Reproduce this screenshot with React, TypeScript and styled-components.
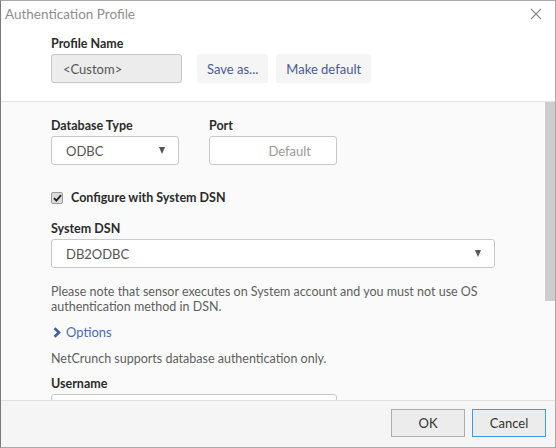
import React from "react";
import styled, { createGlobalStyle } from "styled-components";

const GlobalStyle = createGlobalStyle`
  html, body { margin: 0; padding: 0; background: #ffffff; }
  body { font-family: Lato, "Open Sans", sans-serif; font-size: 12.5px; color: #555; }
  * { box-sizing: border-box; }
`;

const Dialog = styled.div`
  width: 556px;
  height: 448px;
  display: flex;
  flex-direction: column;
  border-left: 1px solid #7a7a7a;
  border-top: 1px solid #a9a9a9;
  border-right: 1px solid #a9a9a9;
  border-bottom: 1px solid #a9a9a9;
  background: #fff;
  overflow: hidden;
`;

const Header = styled.div`
  flex: none;
  height: 101px;
  background: #fff;
  border-bottom: 1px solid #e4e4e4;
  display: flex;
  flex-direction: column;
`;

const TitleBar = styled.div`
  height: 26px;
  display: flex;
  align-items: center;
  justify-content: space-between;
  padding: 0 12px 0 4px;
`;

const Title = styled.div`
  font-size: 13.5px;
  color: #8e8e8e;
`;

const CloseButton = styled.button`
  border: 0;
  background: transparent;
  padding: 0;
  width: 14px;
  height: 14px;
  display: flex;
  align-items: center;
  justify-content: center;
  cursor: pointer;
`;

const HeaderContent = styled.div`
  padding: 9px 0 0 50px;
`;

const Label = styled.div`
  font-weight: 700;
  font-size: 12.5px;
  color: #2b2b2b;
  line-height: 15px;
  margin-bottom: 3px;
`;

const Row = styled.div<{ $gap: number }>`
  display: flex;
  gap: ${(p) => p.$gap}px;
  align-items: flex-start;
`;

const ReadonlyInput = styled.div`
  width: 131px;
  height: 29px;
  border: 1px solid #c6c6c6;
  border-radius: 3px;
  background: #ececec;
  color: #555;
  display: flex;
  align-items: center;
  padding-left: 11px;
  font-size: 13px;
`;

const LinkButton = styled.button`
  height: 29px;
  border: 0;
  border-radius: 3px;
  background: #f5f5f5;
  color: #4a5a91;
  font-family: inherit;
  font-size: 13px;
  padding: 0 10px;
  cursor: pointer;
`;

const ButtonGroup = styled.div`
  display: flex;
  gap: 8px;
  margin-left: 15px;
`;

const BodyFrame = styled.div`
  flex: 1;
  position: relative;
  overflow: hidden;
  background: #fafafa;
`;

const Body = styled.div`
  height: 100%;
  overflow-y: scroll;
  scrollbar-width: none;
  padding: 16px 0 30px 50px;
  &::-webkit-scrollbar { display: none; }
`;

const ScrollThumb = styled.div`
  position: absolute;
  top: 0;
  right: 0;
  width: 10px;
  height: 199px;
  background: #cdcdcd;
`;

const Field = styled.div<{ $mb?: number }>`
  display: flex;
  flex-direction: column;
  margin-bottom: ${(p) => p.$mb ?? 0}px;
`;

const SelectBox = styled.div<{ $width: number }>`
  width: ${(p) => p.$width}px;
  height: 29px;
  border: 1px solid #c8c8c8;
  border-radius: 3px;
  background: #fff;
  display: flex;
  align-items: center;
  justify-content: space-between;
  padding: 0 13px 0 14px;
  color: #555;
  font-size: 13px;
`;

const Arrow = styled.span`
  width: 0;
  height: 0;
  border-left: 3.5px solid transparent;
  border-right: 3.5px solid transparent;
  border-top: 7px solid #555;
`;

const TextInput = styled.div<{ $width: number; $align?: string }>`
  width: ${(p) => p.$width}px;
  height: 29px;
  border: 1px solid #c8c8c8;
  border-radius: 3px;
  background: #fff;
  display: flex;
  align-items: center;
  justify-content: ${(p) => p.$align ?? "flex-start"};
  padding: 0 25px 0 12px;
  color: #999;
  font-size: 13px;
`;

const CheckRow = styled.label`
  display: flex;
  align-items: center;
  gap: 8px;
  line-height: 16px;
  margin: 25px 0 15px 0;
  font-weight: 700;
  color: #2b2b2b;
  font-size: 12.5px;
`;

const CheckBox = styled.span`
  width: 12px;
  height: 12px;
  border: 1px solid #9a9a9a;
  border-radius: 2px;
  background: #dcdcdc;
  display: flex;
  align-items: center;
  justify-content: center;
`;

const Note = styled.p`
  margin: 0;
  width: 445px;
  line-height: 15px;
  color: #5f5f5f;
  font-size: 12.5px;
`;

const OptionsLink = styled.a`
  display: flex;
  align-items: center;
  gap: 5px;
  line-height: 16px;
  margin: 10px 0 0 2px;
  color: #4a6cb4;
  font-size: 13px;
  cursor: pointer;
`;

const Plain = styled.p`
  margin: 11px 0 10px 0;
  line-height: 15px;
  color: #5f5f5f;
  font-size: 12.5px;
`;

const Footer = styled.div`
  flex: none;
  height: 47px;
  background: #f5f5f5;
  border-top: 1px solid #e2e2e2;
  display: flex;
  align-items: center;
  justify-content: flex-end;
  gap: 7px;
  padding: 0 9px 2px 0;
`;

const DialogButton = styled.button<{ $focused?: boolean }>`
  width: 74px;
  height: 28px;
  background: #ececec;
  border: 1px solid ${(p) => (p.$focused ? "#3d9bea" : "#adadad")};
  color: #333;
  font-family: inherit;
  font-size: 13px;
  cursor: pointer;
`;

export default function App() {
  return (
    <>
      <GlobalStyle />
      <Dialog>
        <Header>
          <TitleBar>
            <Title>Authentication Profile</Title>
            <CloseButton aria-label="Close">
              <svg width="12" height="12" viewBox="0 0 12 12">
                <path d="M1 1 L11 11 M11 1 L1 11" stroke="#8a8a8a" strokeWidth="1.1" fill="none" />
              </svg>
            </CloseButton>
          </TitleBar>
          <HeaderContent>
            <Label>Profile Name</Label>
            <Row $gap={0}>
              <ReadonlyInput>&lt;Custom&gt;</ReadonlyInput>
              <ButtonGroup>
                <LinkButton>Save as...</LinkButton>
                <LinkButton>Make default</LinkButton>
              </ButtonGroup>
            </Row>
          </HeaderContent>
        </Header>
        <BodyFrame>
          <Body>
            <Row $gap={30}>
              <Field>
                <Label>Database Type</Label>
                <SelectBox $width={128}>
                  ODBC
                  <Arrow />
                </SelectBox>
              </Field>
              <Field>
                <Label>Port</Label>
                <TextInput $width={128} $align="flex-end">Default</TextInput>
              </Field>
            </Row>
            <CheckRow>
              <CheckBox>
                <svg width="9" height="8" viewBox="0 0 9 8">
                  <path d="M1 4.2 L3.4 6.6 L8 1.2" stroke="#222" strokeWidth="1.8" fill="none" />
                </svg>
              </CheckBox>
              Configure with System DSN
            </CheckRow>
            <Field $mb={16}>
              <Label>System DSN</Label>
              <SelectBox $width={444}>
                DB2ODBC
                <Arrow />
              </SelectBox>
            </Field>
            <Note>
              Please note that sensor executes on System account and you must not use OS authentication method in DSN.
            </Note>
            <OptionsLink>
              <svg width="8" height="11" viewBox="0 0 8 11">
                <path d="M1.5 1.2 L6 5.5 L1.5 9.8" stroke="#3b5fa8" strokeWidth="2.6" fill="none" />
              </svg>
              Options
            </OptionsLink>
            <Plain>NetCrunch supports database authentication only.</Plain>
            <Field $mb={14}>
              <Label>Username</Label>
              <TextInput $width={286} />
            </Field>
            <Field>
              <Label>Password</Label>
              <TextInput $width={286} />
            </Field>
          </Body>
          <ScrollThumb />
        </BodyFrame>
        <Footer>
          <DialogButton>OK</DialogButton>
          <DialogButton $focused>Cancel</DialogButton>
        </Footer>
      </Dialog>
    </>
  );
}
